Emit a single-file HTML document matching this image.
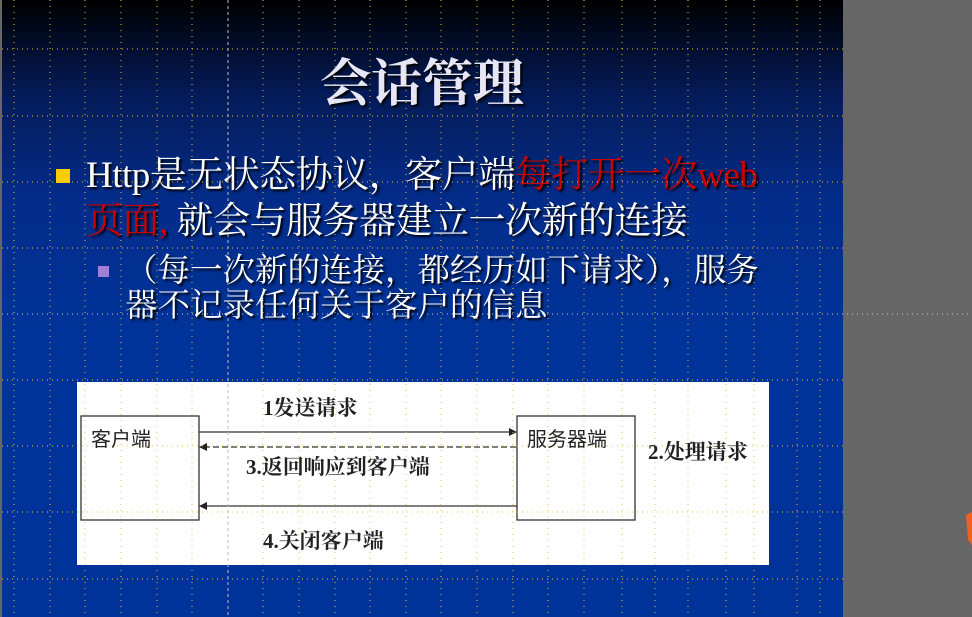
<!DOCTYPE html>
<html><head><meta charset="utf-8"><style>
body{margin:0;width:972px;height:617px;overflow:hidden;background:#666;position:relative;font-family:"Liberation Serif","Noto Serif CJK SC",serif}
#slide{position:absolute;left:2px;top:0;width:841px;height:617px;background:linear-gradient(#000 0px,#041a55 90px,#032c8a 200px,#003399 330px,#003399 617px)}
.t{position:absolute;white-space:nowrap}
.sh{text-shadow:2px 2px 2px #000}
</style></head><body>
<div id="slide"></div>
<div class="t sh" style="left:320px;top:42px;font-size:51px;color:#e6e6f6;font-family:'Noto Serif CJK SC',serif;font-weight:bold">会话管理</div>
<div style="position:absolute;left:56px;top:169px;width:14px;height:14px;background:#ffcc00"></div>
<div class="t sh" style="left:86px;top:153px;font-size:37px;color:#fff;line-height:46px;letter-spacing:-0.5px">Http是无状态协议，客户端<span style="color:#c00">每打开一次web</span><br><span style="color:#c00">页面,</span> 就会与服务器建立一次新的连接</div>
<div style="position:absolute;left:98px;top:266px;width:11px;height:11px;background:#9f7fd8"></div>
<div class="t sh" style="left:125px;top:254px;font-size:32.5px;color:#fff;line-height:35px">（每一次新的连接，都经历如下请求），服务<br>器不记录任何关于客户的信息</div>
<div style="position:absolute;left:77px;top:382px;width:692px;height:183px;background:#fff"></div>
<svg width="972" height="617" style="position:absolute;left:0;top:0">
<g fill="none" stroke="#333" stroke-width="1.3">
<rect x="81" y="416" width="118" height="104"/>
<rect x="517" y="416" width="118" height="104"/>
<line x1="199" y1="432" x2="512" y2="432"/>
<line x1="204" y1="447" x2="517" y2="447" stroke-dasharray="6,3"/>
<line x1="204" y1="506" x2="517" y2="506"/>
</g>
<g fill="#222"><polygon points="517,432 509,428 509,436"/><polygon points="199,447 207,443 207,451"/><polygon points="199,506 207,502 207,510"/></g>
<g stroke="#e8c040" stroke-width="1" stroke-dasharray="1,4">
<line x1="2" y1="49" x2="843" y2="49"/><line x1="2" y1="116" x2="843" y2="116"/><line x1="2" y1="182" x2="843" y2="182"/><line x1="2" y1="248" x2="843" y2="248"/><line x1="2" y1="314" x2="972" y2="314" stroke="#ccb"/><line x1="2" y1="380" x2="843" y2="380"/><line x1="2" y1="446" x2="843" y2="446"/><line x1="2" y1="512" x2="843" y2="512"/><line x1="2" y1="579" x2="843" y2="579"/>
</g>
<g stroke="#e8c040" stroke-width="1" stroke-dasharray="1,5">
<line x1="14" y1="0" x2="14" y2="617"/><line x1="50" y1="0" x2="50" y2="617"/><line x1="85" y1="0" x2="85" y2="617"/><line x1="121" y1="0" x2="121" y2="617"/><line x1="157" y1="0" x2="157" y2="617"/><line x1="192" y1="0" x2="192" y2="617"/><line x1="228" y1="0" x2="228" y2="617" stroke="#bbb" stroke-dasharray="3,3"/><line x1="263" y1="0" x2="263" y2="617"/><line x1="299" y1="0" x2="299" y2="617"/><line x1="335" y1="0" x2="335" y2="617"/><line x1="370" y1="0" x2="370" y2="617"/><line x1="406" y1="0" x2="406" y2="617"/><line x1="441" y1="0" x2="441" y2="617"/><line x1="477" y1="0" x2="477" y2="617"/><line x1="513" y1="0" x2="513" y2="617"/><line x1="548" y1="0" x2="548" y2="617"/><line x1="584" y1="0" x2="584" y2="617"/><line x1="622" y1="0" x2="622" y2="617"/><line x1="655" y1="0" x2="655" y2="617"/><line x1="688" y1="0" x2="688" y2="617"/><line x1="726" y1="0" x2="726" y2="617"/><line x1="754" y1="0" x2="754" y2="617"/><line x1="797" y1="0" x2="797" y2="617"/><line x1="820" y1="0" x2="820" y2="617"/>
</g>
<polygon points="966,515 972,512 972,545 968,540" fill="#f06020"/>
</svg>
<div class="t" style="left:91px;top:423px;font-size:20px;color:#222;font-family:'Noto Sans CJK SC',sans-serif">客户端</div>
<div class="t" style="left:527px;top:423px;font-size:20px;color:#222;font-family:'Noto Sans CJK SC',sans-serif">服务器端</div>
<div class="t" style="left:263px;top:392px;font-size:21px;color:#222;font-weight:bold">1发送请求</div>
<div class="t" style="left:246px;top:451px;font-size:21px;color:#222;font-weight:bold">3.返回响应到客户端</div>
<div class="t" style="left:263px;top:525px;font-size:21px;color:#222;font-weight:bold">4.关闭客户端</div>
<div class="t" style="left:648px;top:436px;font-size:21px;color:#222;font-weight:bold">2.处理请求</div>
</body></html>
